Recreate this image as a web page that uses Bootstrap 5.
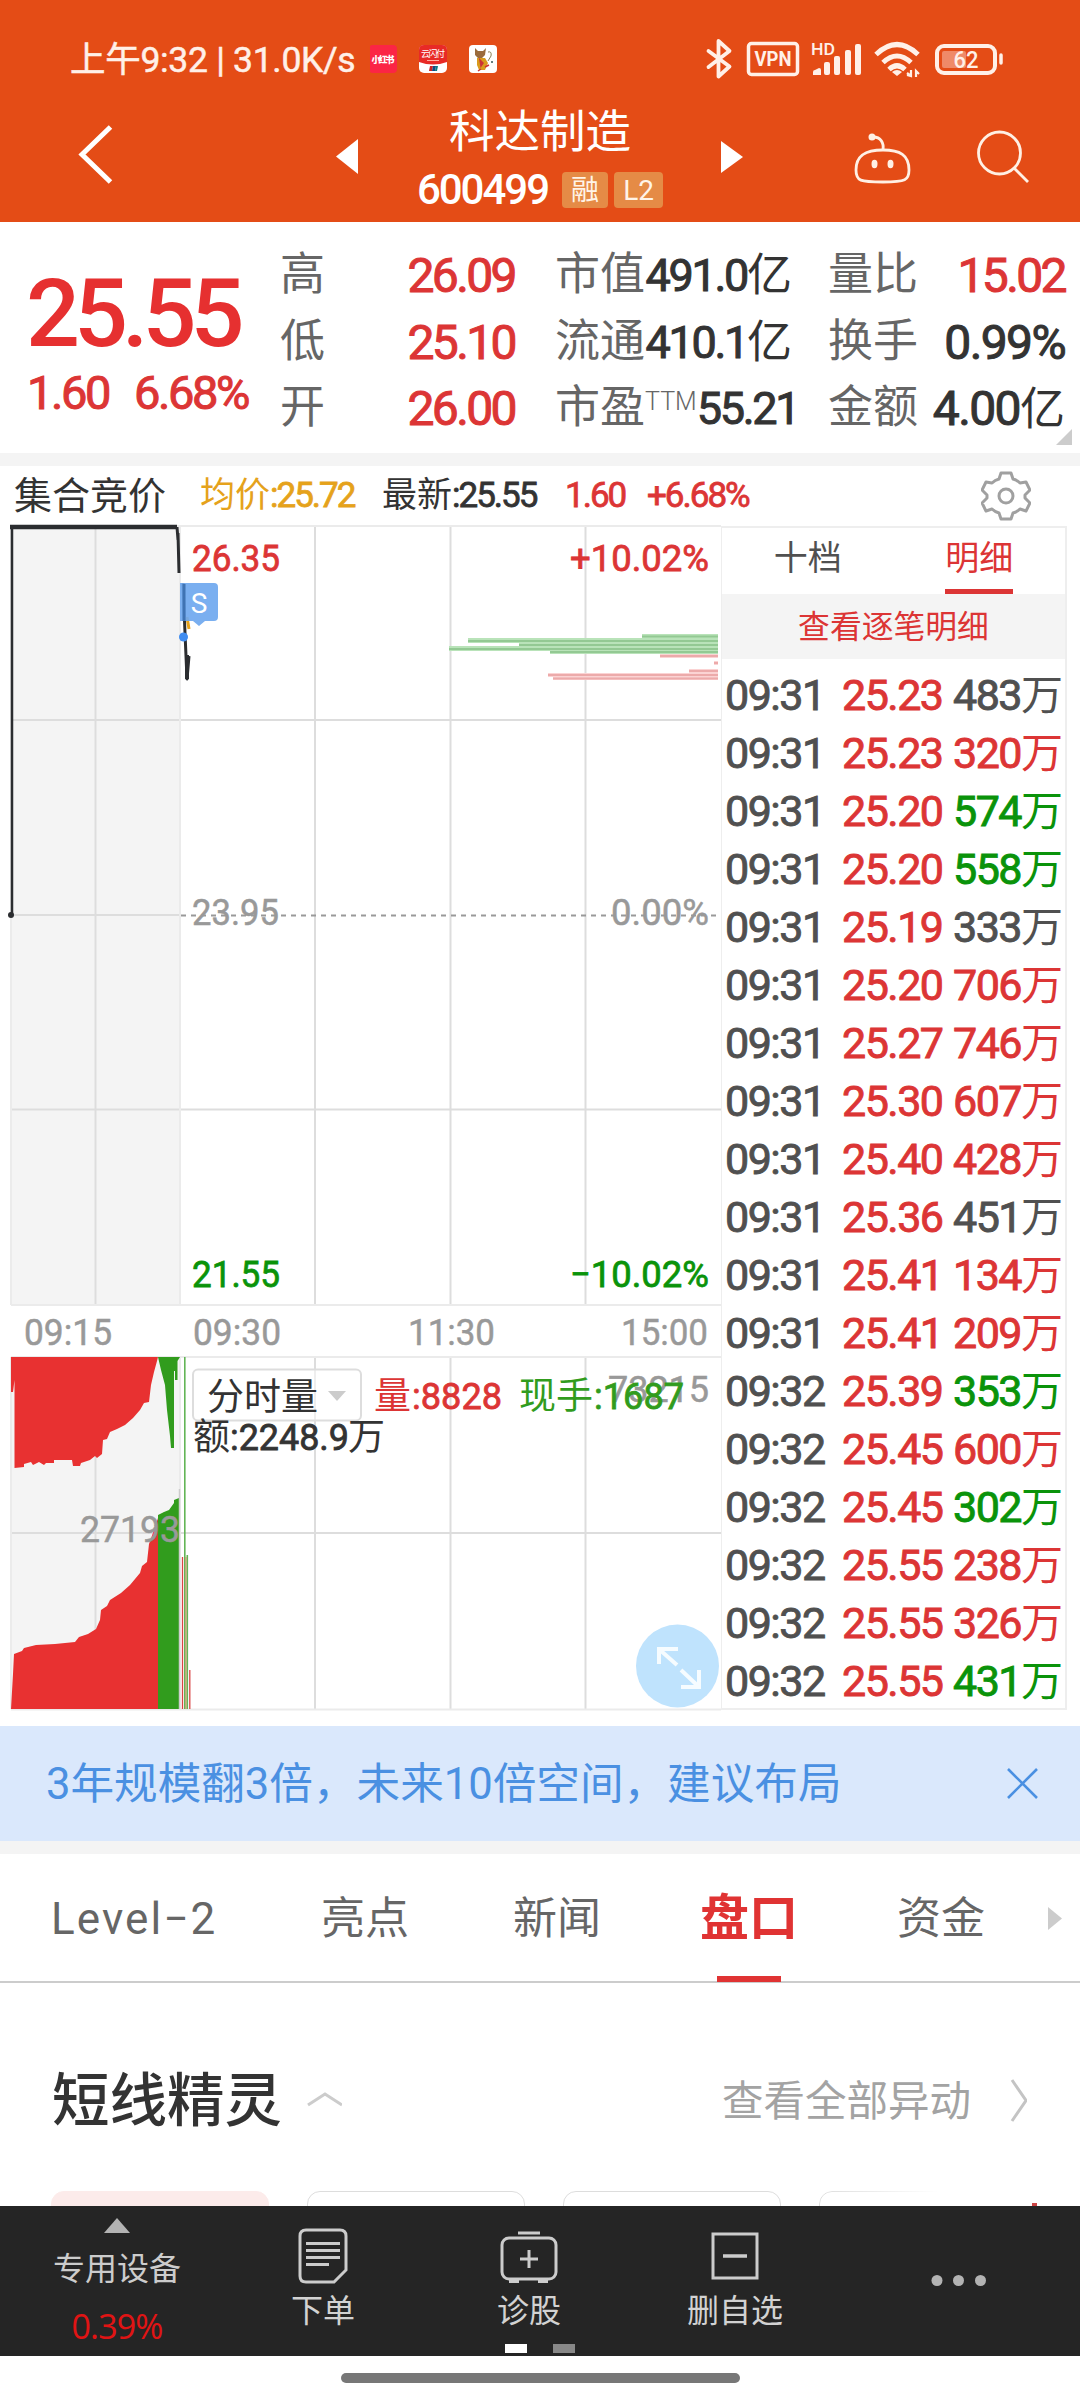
<!DOCTYPE html>
<html lang="zh-CN">
<head>
<meta charset="utf-8">
<meta name="viewport" content="width=device-width, initial-scale=1">
<title>科达制造 600499</title>
<link href="https://cdn.jsdelivr.net/npm/bootstrap@5.3.0/dist/css/bootstrap.min.css" rel="stylesheet">
<style>
:root{--up:#dc3535;--down:#0a930a;--ink:#333;--sub:#666}
body{width:1080px;height:2400px;overflow:hidden;background:#fff;color:var(--ink);font-family:Roboto,"Noto Sans CJK SC",sans-serif;line-height:1}
svg{display:block;flex:none}
.up{color:var(--up)}.down{color:var(--down)}.flat{color:#505050}
.topbar{height:222px;background:#e44c16;color:#fff}
.status{height:84px;padding:36px 75px 0 70px;color:#fff0e8}
.status-time{font-size:35.5px;line-height:48px;width:300px;letter-spacing:-.3px;white-space:nowrap;-webkit-text-stroke:.5px}
.titlebar{height:138px}
.t-name{font-size:45.5px;line-height:56px;padding-top:21px;height:78px}
.t-code{font-size:42px;font-weight:500;letter-spacing:-2px;line-height:36px;margin-right:14px}
.t-tag{background:#e58b46;border-radius:4px;height:36px;line-height:37px;font-size:28px;text-align:center;color:#fff4e8}
.quote{height:231px;padding-top:20px}
.q-main{width:280px;padding-left:26px;color:#e63030}
.q-price{font-size:95px;font-weight:500;letter-spacing:-6px;line-height:100px;padding-top:22px;height:123px}
.q-chg{font-size:47px;font-weight:400;-webkit-text-stroke:1px;letter-spacing:-2.4px;line-height:56px;color:var(--up);gap:25px;padding-left:1px}
.q-row{height:66.5px;font-size:45px;line-height:66px;white-space:nowrap}
.q-row>:first-child{color:var(--sub);font-size:45px}
.q-row>:last-child{font-weight:400;-webkit-text-stroke:1px;letter-spacing:-2.3px;position:relative;top:1px}
.q-row .up,.q-row .q-lg{font-size:48px;letter-spacing:-2.6px;margin-right:3px}
.q-row .q-lg{letter-spacing:-1.6px}
.q-row .q-unit{-webkit-text-stroke:0;letter-spacing:0;font-size:45px}
.ttm{font-size:25px;vertical-align:13px;line-height:1;font-weight:300}
.corner{right:8px;bottom:8px;border-left:16px solid transparent;border-bottom:16px solid #ccc}
.gapbar{height:13px;background:#f4f4f4}
.legend{height:54px;padding:6px 49px 0 14px;font-size:35px;line-height:54px;white-space:nowrap}
.legend b{font-weight:400;-webkit-text-stroke:.8px;font-size:35px;letter-spacing:-2px}
.board{height:1206px}
.ticks{width:346px;height:1184px;margin-top:6px;border:2px solid #eee;border-left-width:1.5px}
.tick-tabs{height:66px;font-size:34px;line-height:60px}
.tick-tabs .on{color:var(--up)}
.tick-tabs .on span{display:inline-block;height:66px;border-bottom:5px solid var(--up)}
.tick-all{height:65px;background:#f4f4f4;color:var(--up);font-size:31.8px;line-height:67px;text-align:center}
.tick-row{height:58px;line-height:58px;font-size:43px;font-weight:400;-webkit-text-stroke:.9px;letter-spacing:-1.5px;padding:0 2px 0 3px;white-space:nowrap}
.tick-row .tm{width:118px;color:#505050}
.tick-row .px{width:112px}
.tick-row i{-webkit-text-stroke:0;font-style:normal;letter-spacing:0;font-size:42px}
.promo{height:115px;background:#dae8fc;color:#4a90e2;font-size:43.6px;padding:0 42px 0 46px}
.secnav{height:129px;border-bottom:2px solid #ccc;font-size:44px;line-height:130px;color:var(--sub);white-space:nowrap}
.secnav .on{color:#e03333;font-weight:700;font-size:49px;position:relative}
.secnav .on::after{content:"";position:absolute;left:17px;bottom:2px;width:64px;height:6px;background:#e03333}
.elf{height:208px;padding:0 53px 0 52px}
.elf-h{font-size:57.5px;font-weight:500;line-height:238px}
.elf-more{font-size:41.5px;line-height:238px;color:#a3a3a3}
.chips{height:15px;padding-left:51px;gap:38px;overflow:hidden}
.chip{width:218px;height:60px;flex:none;border:1.5px solid #ddd;border-radius:13px}
.chip.hot{background:#fcebea;border-color:#fcebea}
.chip.fade-r{-webkit-mask-image:linear-gradient(90deg,#000,transparent 55%);mask-image:linear-gradient(90deg,#000,transparent 55%)}
.chip-dot{width:5px;height:3px;background:#c44;margin:12px 0 0 -43px;flex:none}
.dock{height:150px;background:#252525;color:#ccc;font-size:32px}
.dock-item{width:206px}
.dock-item .cap{line-height:42px;color:#d2d2d2}
.dock .pct{font-size:34px;color:#e11414;font-family:"Open Sans",Roboto,sans-serif;letter-spacing:-.9px}
.pager{left:505px;bottom:3px;gap:26px}
.pager span{width:22px;height:9px;background:#fff}
.pager span+span{background:#888}
.homebar{width:399px;height:10px;border-radius:5px;background:#777;margin-top:17px}
.c-num{font:400 37px Roboto,"Noto Sans CJK SC",sans-serif}
.c-med{stroke-width:.8}
.c-ch{font:400 37px "Noto Sans CJK SC",sans-serif;stroke:none}
</style>
</head>
<body>
<header class="topbar">
  <div class="status d-flex align-items-start">
    <div class="status-time">上午9:32 | 31.0K/s</div>
    <svg width="130" height="48" viewBox="370 36 130 48">
      <rect x="369" y="45" width="28" height="28" rx="4" fill="#fb2545"/>
      <text x="383" y="62.500" font-size="9" font-weight="900" fill="#fff" text-anchor="middle" textLength="23">小红书</text>
      <rect x="419" y="45" width="28" height="28" rx="5" fill="#fff"/>
      <path d="M419 62V50q0-5 5-5h18q5 0 5 5v12q-14 5-28 0z" fill="#e82a26"/>
      <text x="433" y="57" font-size="9" fill="#fff" text-anchor="middle" textLength="24">云闪付</text>
      <path d="M427 60.500h12" stroke="#ffb0a0" stroke-width="1"/>
      <path d="M430 66h3l-1 5h-3z" fill="#c22"/><path d="M433 66h3l-1 5h-3z" fill="#124a80"/><path d="M436 66h2l-1 5h-2z" fill="#087a80"/>
      <rect x="469" y="45" width="28" height="28" rx="4" fill="#fff"/>
      <path d="M475 48l3 3h5l3-3-1 7-3 3h-4l-3-3z" fill="#9b6b3c"/><path d="M477 58l8 0 3 5-3 7h-6l-2-5z" fill="#d99a1c"/>
      <path d="M480 60l3 3-2 3zM485 67l4-2M478 71l3-2" stroke="#c33" stroke-width="1.500" fill="#c33"/><path d="M488 52q4-1 3 4l-3 5" stroke="#8a8055" fill="none"/><circle cx="492" cy="62" r="1" fill="#355"/>
    </svg>
    <svg class="ms-auto" width="305" height="48" viewBox="700 36 305 48" fill="none" stroke="#fff0e8">
      <path d="M708.500 51l21 15.500-11 10V41l11 10-21 16" stroke-width="3.800" stroke-linejoin="round" stroke-linecap="round"/>
      <rect x="748.500" y="43.500" width="49" height="31" rx="3" stroke-width="3.500"/>
      <text x="773" y="66" font-size="19.500" font-weight="700" text-anchor="middle" textLength="37" lengthAdjust="spacingAndGlyphs" fill="#fff0e8" stroke="none">VPN</text>
      <text x="811" y="55" font-size="16" font-weight="500" textLength="24" lengthAdjust="spacingAndGlyphs" fill="#fff0e8" stroke="none">HD</text>
      <g stroke="none" fill="#fff0e8"><path d="M813 75v-3q0-2 2-2l4-2q2 0 2 2v5z"/><rect x="824" y="62" width="6" height="13" rx="2"/><rect x="834" y="56" width="6" height="19" rx="2"/><rect x="845" y="50" width="6" height="25" rx="2"/><rect x="855" y="44" width="6" height="31" rx="2"/></g>
      <g stroke-width="5"><path d="M876 54.500q21-20 42 0"/><path d="M883 62.500q14-13 28 0"/><path d="M889 69.500q8-7.500 16 0"/></g>
      <path d="M892 72q5-4 10 0l-5 4z" fill="#fff0e8" stroke="none"/>
      <path d="M911 70v6l-4-1M911 70v6M911 76l-4-3M916 77V71l3 3" stroke-width="2.200"/>
      <rect x="937" y="46" width="58" height="27" rx="7" stroke-width="4"/>
      <rect x="942" y="51" width="24" height="17" rx="2" fill="#ef8a68" stroke="none"/>
      <path d="M1001 55v8" stroke-width="3.500" stroke-linecap="round"/>
      <text x="966" y="67.500" font-size="23" font-weight="500" text-anchor="middle" textLength="25" lengthAdjust="spacingAndGlyphs" fill="#fff0e8" stroke="none">62</text>
    </svg>
  </div>
  <nav class="titlebar d-flex">
    <svg width="400" height="138" viewBox="0 84 400 138"><path d="M110.500 127L82 154.500l28.500 27.500" fill="none" stroke="#fff" stroke-width="5"/><path d="M358 139v35l-22-17.500z" fill="#fff"/></svg>
    <div class="flex-fill text-center">
      <div class="t-name">科达制造</div>
      <div class="d-flex justify-content-center" style="padding-top:10px">
        <span class="t-code">600499</span><span class="t-tag" style="width:46px;margin-right:6px">融</span><span class="t-tag" style="width:49px">L2</span>
      </div>
    </div>
    <svg width="400" height="138" viewBox="680 84 400 138" fill="none" stroke="#fff0e4" stroke-width="2.800"><path d="M721 141v32l22-16z" fill="#fff" stroke="none"/>
      <path d="M883 150c-17 0-27 5-27 20 0 11 4 12 27 12s26-2 26-12c0-15-9-20-26-20z"/><path d="M883 150c1-7-2-13-10-13"/><circle cx="872" cy="137" r="3.500" fill="#fff0e4" stroke="none"/><ellipse cx="874.500" cy="164" rx="3" ry="4.200" fill="#fff0e4" stroke="none"/><ellipse cx="890.500" cy="164" rx="3" ry="4.200" fill="#fff0e4" stroke="none"/>
      <circle cx="999.500" cy="153" r="21"/><path d="M1014 168l14 14"/>
    </svg>
  </nav>
</header>

<section class="quote d-flex position-relative">
  <div class="q-main">
    <div class="q-price">25.55</div>
    <div class="q-chg d-flex"><span>1.60</span><span>6.68%</span></div>
  </div>
  <div style="width:238px;margin-right:37px">
    <div class="q-row d-flex justify-content-between"><span>高</span><span class="up">26.09</span></div>
    <div class="q-row d-flex justify-content-between"><span>低</span><span class="up">25.10</span></div>
    <div class="q-row d-flex justify-content-between"><span>开</span><span class="up">26.00</span></div>
  </div>
  <div style="width:237px;margin-right:36px">
    <div class="q-row d-flex justify-content-between"><span>市值</span><span>491.0<span class="q-unit">亿</span></span></div>
    <div class="q-row d-flex justify-content-between"><span>流通</span><span>410.1<span class="q-unit">亿</span></span></div>
    <div class="q-row d-flex justify-content-between"><span>市盈<span class="ttm">TTM</span></span><span>55.21</span></div>
  </div>
  <div style="width:240px">
    <div class="q-row d-flex justify-content-between"><span>量比</span><span class="up">15.02</span></div>
    <div class="q-row d-flex justify-content-between"><span>换手</span><span class="q-lg">0.99%</span></div>
    <div class="q-row d-flex justify-content-between"><span>金额</span><span class="q-lg">4.00<span class="q-unit">亿</span></span></div>
  </div>
  <i class="corner position-absolute"></i>
</section>
<div class="gapbar"></div>

<div class="legend d-flex align-items-center">
  <span style="font-size:38px;width:186px">集合竞价</span>
  <span style="color:#e5a21b;width:182px">均价<b>:25.72</b></span>
  <span style="width:183px">最新<b>:25.55</b></span>
  <b class="up" style="width:82px">1.60</b>
  <b class="up">+6.68%</b>
  <svg class="ms-auto" width="50" height="50" viewBox="-25 -25 50 50" fill="none" stroke="#a0a0a0" stroke-width="3"><path stroke-linejoin="round" d="M-5-23H5L7-17Q11-16 14-13L20-14 24-6 19-1V2L24 7 20 15 14 13Q11 16 7 17L5 23H-5L-7 17Q-11 16-14 13L-20 15-24 7-19 2V-1L-24-6-20-14-14-13Q-11-16-7-17Z"/><circle r="7"/></svg>
</div>

<main class="board d-flex">
  <svg width="721" height="1206" viewBox="0 520 721 1206">
    <rect x="11" y="526" width="169" height="779" fill="#f4f4f4"/><rect x="11" y="1357" width="169" height="352" fill="#f4f4f4"/>
    <g stroke="#ddd" stroke-width="2" fill="none">
      <path d="M95.500 526V1305M315 526V1305M450.500 526V1305M585.500 526V1305M11 720H721M11 915H180M11 1109.500H721"/>
      <path d="M95.500 1357V1709M315 1357V1709M450.500 1357V1709M585.500 1357V1709M11 1533H721"/>
      <path stroke="#ebebeb" d="M11 526H721M11 1305H721M11 526V1305M180 526V1305M11 1357H721M11 1709.500H721M11 1357V1709M180 1357V1709"/>
    </g>
    <path d="M181 915.500H721" stroke="#999" stroke-width="2" stroke-dasharray="5 5"/>
    <g fill="#b9e3b9"><path d="M642 634h76v5h-76zM468 638h250v5H468zM519 642h199v5H519zM449 646h269v5H449zM550 650h168v4H550z"/></g>
    <g stroke="#93c993" stroke-width="2"><path d="M642 636.500h76M468 641h250M519 645h199M449 649h269M550 652h168"/></g>
    <g fill="#fbd3d3"><path d="M660 654h58v4h-58zM714 661h4v4h-4zM689 669h29v4h-29zM548 673h170v4H548zM553 676h165v4H553z"/></g>
    <g stroke="#ecaaaa" stroke-width="2"><path d="M660 656h58M714 663h4M689 671h29M548 675h170M553 678.500h165"/></g>
    <g fill="none" stroke="#2b2d30" stroke-linejoin="round">
      <path d="M12 915V527" stroke-width="2.500"/><path d="M10 527H177" stroke-width="4.500"/>
      <path d="M177 527l1 13M178 533l1 40" stroke-width="3"/>
      <path d="M183 583l2 50 2 46 2-23" stroke-width="3"/><path d="M187 655v24" stroke-width="4"/>
    </g>
    <circle cx="11" cy="915" r="3" fill="#2b2d30"/>
    <path d="M187 617l2 12" stroke="#e5a21b" stroke-width="3"/>
    <circle cx="183.500" cy="637" r="4.500" fill="#3f8cf0"/>
    <path d="M180 583h34q4 0 4 4v30q0 4-4 4h-9l-6 5-6-5h-13z" fill="#6fa8ef" fill-opacity=".92"/>
    <path d="M184 584v37" stroke="#3f73b3" stroke-width="3"/>
    <text x="199" y="613" font-size="28" fill="#fff" text-anchor="middle">S</text>

    <path fill="#e83131" d="M11 1357H158L157 1361 154 1372 151 1385 149 1402 144 1403 140 1410 133 1418 125 1425 117 1429 110 1432 107 1439 103 1440 102 1454 97 1458 95 1456 90 1460 81 1463 80 1466H73L72 1460H54V1463H46L44 1465 39 1462 33 1465 31 1462 24 1464V1467L14.500 1468V1380L13 1392H11Z"/>
    <path fill="#319c1d" d="M158 1357H180L177.500 1361V1380H175V1371H174V1448H171L170 1436 167 1410 165 1385 161 1370Z"/>
    <path fill="#e83131" d="M11 1709L13 1674 14 1654 22 1651 24 1648 36 1645 55 1644 75 1642 79 1637 88 1634 96 1629 100 1620 101 1610 107 1606 110 1600 121 1593 130 1585 140 1573 142 1566 147 1562 149 1544 154 1530 158 1518V1709Z"/>
    <path fill="#319c1d" d="M158 1515L164 1512 169 1510 174 1503V1500L179 1498V1709H158Z"/>
    <path d="M179.500 1489V1709" stroke="#ccc" stroke-width="1.500"/>
    <path d="M182.500 1557V1709M189.800 1670V1709" stroke="#d94545" stroke-width="1.300"/><path d="M184.800 1357V1709M187.300 1555V1709" stroke="#63b556" stroke-width="1.600"/><path d="M186 1557V1709" stroke="#c79a62" stroke-width="1.200"/>

    <g class="c-num" fill="#999" stroke="#999" stroke-width=".5">
      <text x="192" y="925" textLength="87" lengthAdjust="spacingAndGlyphs">23.95</text><text x="611" y="925" textLength="98" lengthAdjust="spacingAndGlyphs">0.00%</text>
      <text x="24" y="1345" textLength="88" lengthAdjust="spacingAndGlyphs">09:15</text><text x="193" y="1345" textLength="88" lengthAdjust="spacingAndGlyphs">09:30</text><text x="408" y="1345" textLength="87" lengthAdjust="spacingAndGlyphs">11:30</text><text x="621" y="1345" textLength="87" lengthAdjust="spacingAndGlyphs">15:00</text>
      <text x="80" y="1542" textLength="100" lengthAdjust="spacingAndGlyphs">27193</text><text x="608" y="1402" textLength="101" lengthAdjust="spacingAndGlyphs">73215</text>
    </g>
    <g class="c-num c-med" fill="#dc3535" stroke="#dc3535"><text x="192" y="571" textLength="88" lengthAdjust="spacingAndGlyphs">26.35</text><text x="570" y="571" textLength="139" lengthAdjust="spacingAndGlyphs">+10.02%</text></g>
    <g class="c-num c-med" fill="#0a930a" stroke="#0a930a"><text x="192" y="1287" textLength="88" lengthAdjust="spacingAndGlyphs">21.55</text><text x="570" y="1287" textLength="139" lengthAdjust="spacingAndGlyphs">−10.02%</text></g>
    <rect x="193" y="1369.500" width="168" height="51" rx="5" fill="#fff" fill-opacity=".5" stroke="#ddd" stroke-width="2"/>
    <text class="c-ch" x="207" y="1410" fill="#333">分时量</text><path d="M328 1391h18l-9 10z" fill="#ccc"/>
    <g class="c-med" fill="#dc3535" stroke="#dc3535"><text class="c-ch" x="374" y="1409">量</text><text class="c-num" x="412" y="1409" textLength="90" lengthAdjust="spacingAndGlyphs">:8828</text></g>
    <g class="c-med" fill="#319c1d" stroke="#319c1d"><text class="c-ch" x="519" y="1409">现手</text><text class="c-num" x="594" y="1409" textLength="90" lengthAdjust="spacingAndGlyphs">:1687</text></g>
    <g class="c-med" fill="#333" stroke="#333"><text class="c-ch" x="193" y="1450">额</text><text class="c-num" x="230" y="1450" textLength="119" lengthAdjust="spacingAndGlyphs">:2248.9</text><text class="c-ch" x="348" y="1450">万</text></g>
    <circle cx="677.500" cy="1666" r="41.500" fill="#bfe3fd"/>
    <g fill="none" stroke="#f6fcff" stroke-width="4"><path d="M659 1664v-15h19M660 1650l17 15M699 1670v17h-18M698 1686l-17-16"/></g>
  </svg>
  <aside class="ticks">
    <div class="tick-tabs row g-0 text-center"><div class="col-6 flat">十档</div><div class="col-6 on"><span>明细</span></div></div>
    <div class="tick-all">查看逐笔明细</div>
    <div id="tickList" style="padding-top:7px"></div>
  </aside>
</main>

<section class="promo d-flex align-items-center justify-content-between"><span style="padding-top:2px">3年规模翻3倍，未来10倍空间，建议布局</span>
  <svg width="31" height="31" viewBox="0 0 31 31"><path d="M1 1l29 29M30 1L1 30" stroke="#4a90e2" stroke-width="2.600"/></svg></section>
<div class="gapbar"></div>
<nav class="secnav d-flex">
  <span style="padding-left:51px;width:321px;letter-spacing:2.1px">Level−2</span><span style="width:192px">亮点</span><span style="width:187px">新闻</span><span style="width:197px"><span class="on d-inline-block">盘口</span></span><span style="width:151px">资金</span>
  <svg width="15" height="127" viewBox="0 0 15 127"><path d="M0 53v23l14-11.500z" fill="#ccc"/></svg>
</nav>
<section class="elf d-flex">
  <span class="elf-h">短线精灵</span>
  <svg width="60" height="208" viewBox="282 1984 60 208"><path d="M311 2106l17-11 17 11" transform="translate(-3)" fill="none" stroke="#ccc" stroke-width="3"/></svg>
  <span class="elf-more ms-auto">查看全部异动</span>
  <svg width="56" height="208" viewBox="971 1984 56 208"><path d="M1012 2081l14 20.500-14 20.500" fill="none" stroke="#c4c4c4" stroke-width="3"/></svg>
</section>
<div class="chips d-flex"><div class="chip hot"></div><div class="chip"></div><div class="chip"></div><div class="chip fade-r"></div><i class="chip-dot"></i></div>

<footer class="dock d-flex position-relative">
  <div class="text-center" style="width:234px;padding:12px 0 0">
    <svg class="mx-auto" width="26" height="15" viewBox="0 0 26 15"><path d="M0 15L13 0l13 15z" fill="#b3b3b3"/></svg>
    <div style="line-height:40px;padding-top:16px">专用设备</div>
    <div class="pct" style="line-height:40px;padding-top:17px">0.39%</div>
  </div>
  <div class="dock-item text-center" style="padding-top:22px;margin-left:-14px">
    <svg class="mx-auto" width="58" height="56" viewBox="294 2228 58 56" fill="none" stroke="#ccc" stroke-width="3"><path d="M306 2230h34q6 0 6 6v34l-12 12h-28q-6 0-6-6v-40q0-6 6-6z"/><path d="M306 2243.500h34M306 2250.500h34M306 2257.500h34M306 2264.500h23"/></svg>
    <div class="cap" style="padding-top:6px">下单</div>
  </div>
  <div class="dock-item text-center" style="padding-top:22px">
    <svg class="mx-auto" width="58" height="56" viewBox="500 2228 58 56" fill="none" stroke="#ccc" stroke-width="3"><rect x="502" y="2238" width="54" height="41" rx="7"/><path d="M518 2233h22M509 2281.500h10M538 2281.500h10M529 2250v18M520 2259h18"/></svg>
    <div class="cap" style="padding-top:6px">诊股</div>
  </div>
  <div class="dock-item text-center" style="padding-top:22px">
    <svg class="mx-auto" width="58" height="56" viewBox="706 2228 58 56" fill="none" stroke="#ccc" stroke-width="3"><rect x="713" y="2234" width="44" height="44"/><path d="M723 2256h24" stroke-width="3.500"/></svg>
    <div class="cap" style="padding-top:6px">删自选</div>
  </div>
  <svg width="242" height="150" viewBox="838 2206 242 150" fill="#b3b3b3"><circle cx="937" cy="2280.500" r="5.500"/><circle cx="958.500" cy="2280.500" r="5.500"/><circle cx="980.500" cy="2280.500" r="5.500"/></svg>
  <div class="pager position-absolute d-flex"><span></span><span></span></div>
</footer>
<div class="homebar mx-auto"></div>

<script src="https://cdn.jsdelivr.net/npm/bootstrap@5.3.0/dist/js/bootstrap.bundle.min.js"></script>
<script>
const ticks = [
  ['09:31','25.23','483','flat'],['09:31','25.23','320','up'],['09:31','25.20','574','down'],['09:31','25.20','558','down'],
  ['09:31','25.19','333','flat'],['09:31','25.20','706','up'],['09:31','25.27','746','up'],['09:31','25.30','607','up'],
  ['09:31','25.40','428','up'],['09:31','25.36','451','flat'],['09:31','25.41','134','up'],['09:31','25.41','209','up'],
  ['09:32','25.39','353','down'],['09:32','25.45','600','up'],['09:32','25.45','302','down'],['09:32','25.55','238','up'],
  ['09:32','25.55','326','up'],['09:32','25.55','431','down']
];
document.getElementById('tickList').innerHTML = ticks.map(([t,p,v,c]) =>
  `<div class="tick-row d-flex"><span class="tm">${t}</span><span class="px up">${p}</span><span class="ms-auto ${c}">${v}<i>万</i></span></div>`).join('');
</script>
</body>
</html>
